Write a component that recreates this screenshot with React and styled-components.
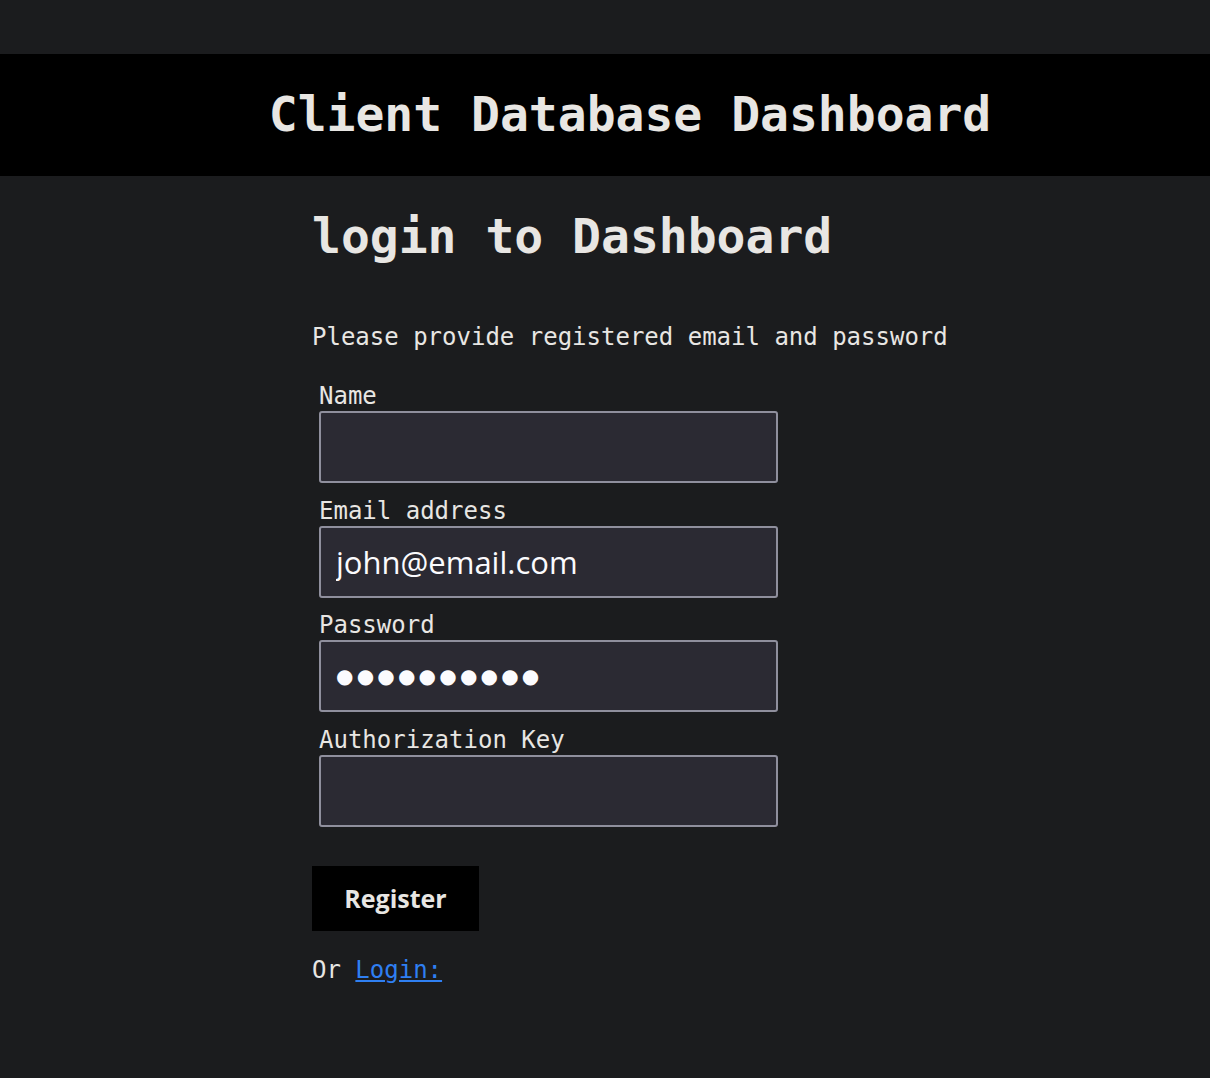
import React from "react";
import styled, { createGlobalStyle } from "styled-components";

const Global = createGlobalStyle`
  html, body { margin: 0; padding: 0; background: #1b1c1e; }
  body {
    color: #e8e6e3;
    font-family: "DejaVu Sans Mono", monospace;
  }
`;

const Page = styled.div`
  padding-top: 54px;
  min-height: 1078px;
  box-sizing: border-box;
`;

const Header = styled.header`
  background: #000;
  height: 122px;
  box-sizing: border-box;
  padding: 32px 0 0 50px;
  text-align: center;
`;

const Title = styled.h1`
  margin: 0;
  font-size: 48px;
  line-height: 56px;
  font-weight: bold;
  color: #e8e6e3;
`;

const Main = styled.main`
  width: 584px;
  margin: 0 auto;
  padding-top: 32px;
  position: relative;
  left: -1px;
`;

const Heading = styled.h2`
  margin: 0;
  font-size: 48px;
  line-height: 56px;
  font-weight: bold;
  white-space: nowrap;
`;

const Lead = styled.p`
  margin: 59px 0 0;
  font-size: 24px;
  line-height: 28px;
  white-space: nowrap;
`;

const Form = styled.form`
  margin: 31px 0 0 7px;
  display: flex;
  flex-direction: column;
  gap: 13.5px;
`;

const Field = styled.div`
  display: flex;
  flex-direction: column;
`;

const Label = styled.label`
  font-size: 24px;
  line-height: 29px;
`;

const Input = styled.input`
  box-sizing: border-box;
  width: 459px;
  height: 72px;
  background: #2b2a33;
  border: 2px solid #8f8f9d;
  border-radius: 3px;
  padding: 0 15px;
  color: #fbfbfe;
  font-family: ${(p) => (p.$mask ? '"DejaVu Sans", sans-serif' : '"Open Sans", "Noto Sans", sans-serif')};
  font-size: ${(p) => (p.$mask ? "20px" : "31px")};
  letter-spacing: ${(p) => (p.$mask ? "3.2px" : "0")};
  outline: none;
`;

const Button = styled.button`
  margin: 39px 0 0 0;
  width: 167px;
  height: 65px;
  background: #000;
  border: none;
  color: #e8e6e3;
  font-family: "Open Sans", "Noto Sans", sans-serif;
  font-weight: bold;
  font-size: 25px;
  align-self: flex-start;
  cursor: pointer;
`;

const Footer = styled.p`
  margin: 25px 0 0;
  font-size: 24px;
  line-height: 28px;
`;

const Link = styled.a`
  color: #2f7ff2;
  text-decoration: underline;
`;

const fields = [
  { id: "name", label: "Name", value: "" },
  { id: "email", label: "Email address", value: "john@email.com" },
  { id: "password", label: "Password", value: "●●●●●●●●●●", mask: true },
  { id: "key", label: "Authorization Key", value: "" },
];

export default function App() {
  return (
    <>
      <Global />
      <Page>
        <Header>
          <Title>Client Database Dashboard</Title>
        </Header>
        <Main>
          <Heading>login to Dashboard</Heading>
          <Lead>Please provide registered email and password</Lead>
          <Form onSubmit={(e) => e.preventDefault()}>
            {fields.map((f) => (
              <Field key={f.id}>
                <Label htmlFor={f.id}>{f.label}</Label>
                <Input id={f.id} defaultValue={f.value} $mask={f.mask} readOnly />
              </Field>
            ))}
          </Form>
          <Button type="button">Register</Button>
          <Footer>
            Or <Link href="#">Login:</Link>
          </Footer>
        </Main>
      </Page>
    </>
  );
}
